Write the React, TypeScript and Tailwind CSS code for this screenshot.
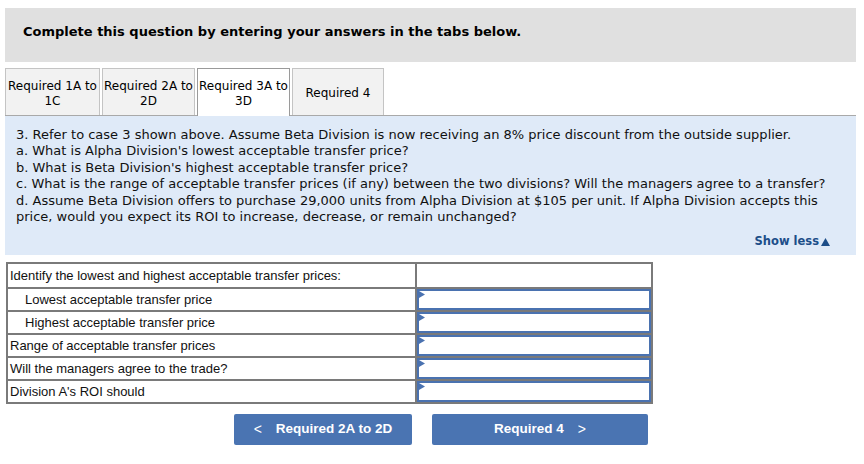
const verdana = { fontFamily: '"DejaVu Sans", Verdana, sans-serif' };
const arial = { fontFamily: '"Liberation Sans", Arial, sans-serif' };

const tabs = [
  { label: ["Required 1A to", "1C"], active: false, w: "w-[95px]" },
  { label: ["Required 2A to", "2D"], active: false, w: "w-[93px]" },
  { label: ["Required 3A to", "3D"], active: true, w: "w-[93px]" },
  { label: ["Required 4"], active: false, w: "w-[92px]" },
];

const rows = [
  { text: "Identify the lowest and highest acceptable transfer prices:", indent: false, input: false, h: "h-[23px]" },
  { text: "Lowest acceptable transfer price", indent: true, input: true, h: "h-[23px]" },
  { text: "Highest acceptable transfer price", indent: true, input: true, h: "h-[23px]" },
  { text: "Range of acceptable transfer prices", indent: false, input: true, h: "h-[23px]" },
  { text: "Will the managers agree to the trade?", indent: false, input: true, h: "h-[23px]" },
  { text: "Division A's ROI should", indent: false, input: true, h: "h-[23px]" },
];

function DropInput() {
  return (
    <div className="relative h-full w-full border-2 border-[#4a72b0] bg-white">
      <svg className="absolute left-0 top-0" width="6" height="7" viewBox="0 0 6 7">
        <path d="M0 0 L6 3.5 L0 7 Z" fill="#4a72b0" />
      </svg>
    </div>
  );
}

export default function App() {
  return (
    <div className="w-[864px] h-[464px] bg-white text-black pt-2 px-[5px]">
      <div className="h-[54px] w-[851px] bg-[#e0e0e0] pl-[18px] pt-[14px]">
        <h1 className="text-[13px] font-bold" style={verdana}>
          Complete this question by entering your answers in the tabs below.
        </h1>
      </div>

      <div className="mt-[6px] flex gap-[2px] h-[47px]">
        {tabs.map((t, i) => (
          <div
            key={i}
            className={`${t.w} flex flex-col items-center justify-center pt-[3px] text-[12px] leading-[15px] border border-b-0 ${
              t.active ? "bg-white border-[#9a9a9a] h-[48px] relative z-10" : "bg-[#f2f2f2] border-[#c4c4c4] h-[47px]"
            }`}
            style={verdana}
          >
            {t.label.map((l) => (
              <span key={l}>{l}</span>
            ))}
          </div>
        ))}
      </div>

      <div className="w-[851px] h-[140px] bg-[#dfeaf8] border-t border-[#a9a9a9] px-[11px] pt-[11px] relative" style={verdana}>
        <div className="text-[13px] leading-[16.4px] text-[#111]">
          <p>3. Refer to case 3 shown above. Assume Beta Division is now receiving an 8% price discount from the outside supplier.</p>
          <p>a. What is Alpha Division's lowest acceptable transfer price?</p>
          <p>b. What is Beta Division's highest acceptable transfer price?</p>
          <p>c. What is the range of acceptable transfer prices (if any) between the two divisions? Will the managers agree to a transfer?</p>
          <p>d. Assume Beta Division offers to purchase 29,000 units from Alpha Division at $105 per unit. If Alpha Division accepts this price, would you expect its ROI to increase, decrease, or remain unchanged?</p>
        </div>
        <div className="absolute right-[26px] top-[117px] text-[11.5px] font-bold text-[#1d4e89] flex items-center gap-[2px]">
          Show less
          <svg width="9" height="8" viewBox="0 0 9 8">
            <path d="M4.5 0 L9 8 L0 8 Z" fill="#1d4e89" />
          </svg>
        </div>
      </div>

      <div className="mt-[7px] ml-px w-[647px] border-2 border-[#7a7a7a]" style={arial}>
        {rows.map((r, i) => (
          <div key={i} className={`flex ${r.h} ${i > 0 ? "border-t-2 border-[#7a7a7a]" : ""}`}>
            <div
              className={`w-[409px] border-r-2 border-[#7a7a7a] flex items-center text-[13px] text-[#111] ${
                r.indent ? "pl-[17px]" : "pl-[2px]"
              }`}
            >
              {r.text}
            </div>
            <div className="flex-1">{r.input ? <DropInput /> : null}</div>
          </div>
        ))}
      </div>

      <div className="mt-[10px] flex gap-[20px] pl-[229px]" style={arial}>
        <button className="w-[178px] h-[31px] bg-[#4a74b2] text-white font-bold text-[13.5px] flex items-center justify-center gap-[14px] rounded-[2px]">
          <span className="font-normal text-[14px]">&lt;</span>
          Required 2A to 2D
        </button>
        <button className="w-[216px] h-[31px] bg-[#4a74b2] text-white font-bold text-[13.5px] flex items-center justify-center gap-[14px] rounded-[2px]">
          Required 4
          <span className="font-normal text-[14px]">&gt;</span>
        </button>
      </div>
    </div>
  );
}
